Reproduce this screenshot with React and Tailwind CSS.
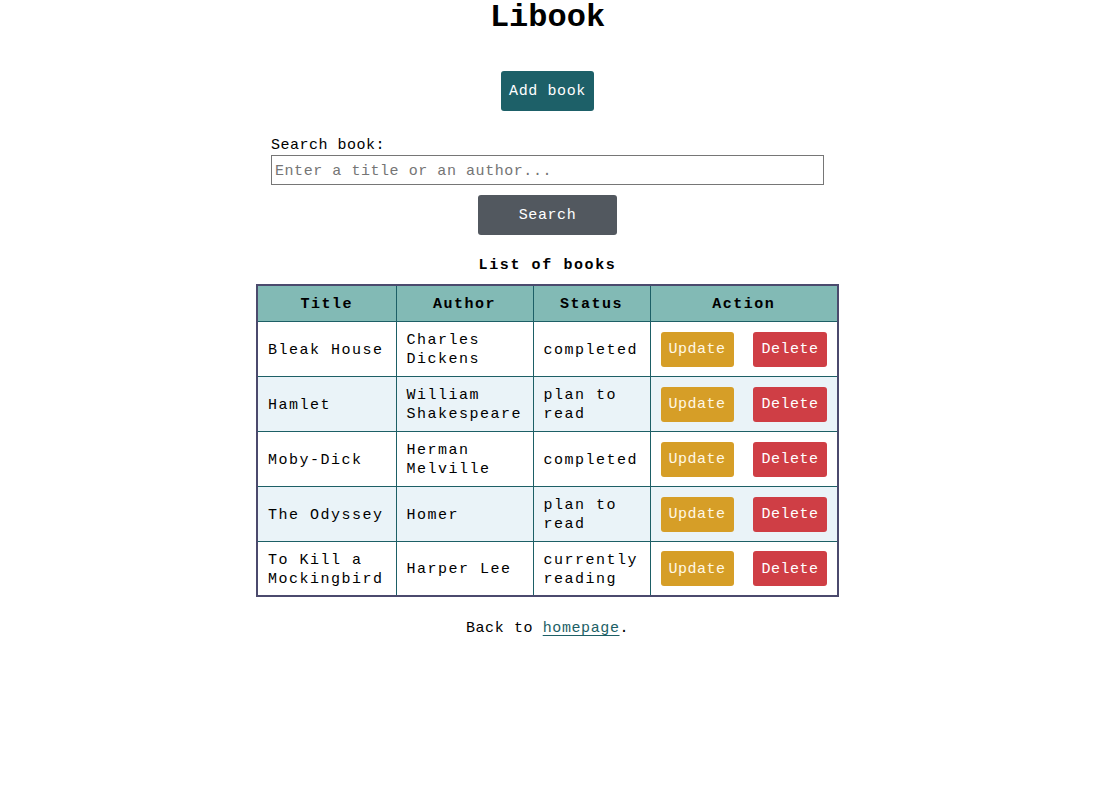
import { useState } from "react";

const books = [
  { title: "Bleak House", author: "Charles Dickens", status: "completed" },
  { title: "Hamlet", author: "William Shakespeare", status: "plan to read" },
  { title: "Moby-Dick", author: "Herman Melville", status: "completed" },
  { title: "The Odyssey", author: "Homer", status: "plan to read" },
  { title: "To Kill a Mockingbird", author: "Harper Lee", status: "currently reading" },
];

function App() {
  const [busqueda, setBusqueda] = useState("");

  return (
    <div className="min-h-[790px] bg-white text-black flex flex-col items-center font-['Liberation_Mono',monospace]">
      <h1 className="text-[32px] leading-[36px] font-bold m-0">Libook</h1>

      <button className="mt-[35px] h-[40px] w-[93px] pt-[3px] bg-[#1d6068] text-white text-[15px] tracking-[0.6px] rounded-[3px]">
        Add book
      </button>

      {/* Buscador */}
      <div className="mt-[24px] w-[553px] flex flex-col">
        <label className="text-[15px] leading-[17px] pt-[2px] tracking-[0.5px]">Search book:</label>
        <input
          type="text"
          className="mt-[1px] h-[30px] w-full border border-[#767676] px-[3px] pt-[2px] text-[15px] tracking-[0.55px] placeholder:text-[#757575]"
          placeholder="Enter a title or an author..."
          value={busqueda}
          onChange={(e) => setBusqueda(e.target.value)}
        />
      </div>
      <button className="mt-[10px] w-[139px] h-[40px] pt-[3px] bg-[#52585f] text-white text-[15px] tracking-[0.6px] rounded-[3px]">
        Search
      </button>

      <h2 className="mt-[20px] pt-[2px] text-[15px] leading-[18px] font-bold tracking-[1.6px]">List of books</h2>

      <table className="mt-[9px] w-[583px] border-collapse border-2 border-[#4b4a6d] text-[15px] tracking-[1.5px]">
        <thead>
          <tr className="bg-[#82bab5] h-[36px]">
            <th className="w-[139px] border border-[#1d5f66] font-bold pt-[3px]">Title</th>
            <th className="w-[137px] border border-[#1d5f66] font-bold pt-[3px]">Author</th>
            <th className="w-[117px] border border-[#1d5f66] font-bold pt-[3px]">Status</th>
            <th className="border border-[#1d5f66] font-bold pt-[3px]">Action</th>
          </tr>
        </thead>
        <tbody>
          {books.map((b, i) => (
            <tr key={b.title} className={i % 2 === 1 ? "bg-[#eaf3f8] h-[55px]" : "bg-white h-[55px]"}>
              <td className="border border-[#1d5f66] px-[10px] pt-[3px] leading-[19px]">{b.title}</td>
              <td className="border border-[#1d5f66] px-[10px] pt-[3px] leading-[19px]">{b.author}</td>
              <td className="border border-[#1d5f66] px-[10px] pt-[3px] leading-[19px]">{b.status}</td>
              <td className="border border-[#1d5f66] pl-[10px] pr-[10px] pt-[1px]">
                <div className="flex justify-between">
                  <button className="w-[73px] h-[35px] pt-[3px] bg-[#d69e27] text-[#fff8e6] rounded-[3px] tracking-[0.5px]">
                    Update
                  </button>
                  <button className="w-[74px] h-[35px] pt-[3px] bg-[#cf3e45] text-white rounded-[3px] tracking-[0.5px]">
                    Delete
                  </button>
                </div>
              </td>
            </tr>
          ))}
        </tbody>
      </table>

      <p className="mt-[20px] pt-[2px] text-[15px] leading-[20px] tracking-[0.6px]">
        Back to{" "}
        <a href="#" className="text-[#1d5f66] underline underline-offset-[3px]">
          homepage
        </a>
        .
      </p>
    </div>
  );
}

export default App;
